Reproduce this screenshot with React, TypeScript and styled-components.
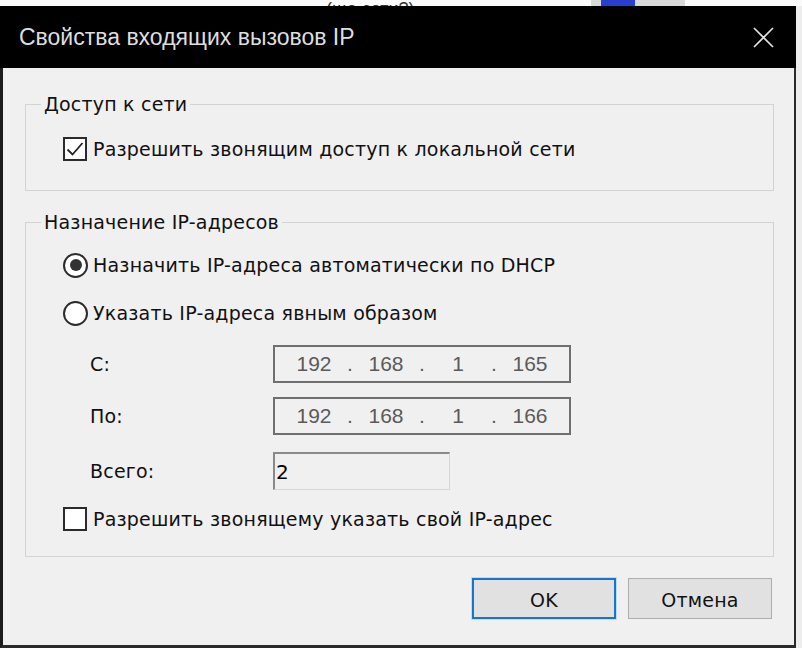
import React from 'react';
import styled, { createGlobalStyle } from 'styled-components';

const GlobalStyle = createGlobalStyle`
  html, body {
    margin: 0;
    padding: 0;
    background: #ececec;
  }
  body {
    font-family: "DejaVu Sans", Verdana, sans-serif;
    width: 802px;
    height: 648px;
    overflow: hidden;
  }
`;

const Screen = styled.div`
  display: flex;
  flex-direction: column;
  width: 802px;
  height: 648px;
`;

const Backdrop = styled.div`
  height: 6px;
  flex: 0 0 6px;
  background: #fafafa;
  overflow: hidden;
  display: flex;
  align-items: flex-end;
`;

const BackdropText = styled.span`
  margin-left: 326px;
  margin-bottom: -12px;
  font-family: "Liberation Sans", Arial, sans-serif;
  font-size: 18px;
  color: #333;
  line-height: 18px;
`;

const BackdropWindow = styled.div`
  margin-left: 176px;
  width: 84px;
  height: 6px;
  background: #d9d9d9;
  display: flex;
  padding-left: 10px;
`;

const BackdropIcon = styled.div`
  width: 34px;
  height: 6px;
  background: #2a3fd0;
`;

const Desk = styled.div`
  flex: 1;
  display: flex;
`;

const Dialog = styled.div`
  width: 796px;
  display: flex;
  flex-direction: column;
  border-left: 3px solid #1c1c1c;
  border-right: 2px solid #2a2a2a;
  border-bottom: 3px solid #2a2a2a;
  box-sizing: border-box;
  height: 642px;
`;

const TitleBar = styled.div`
  height: 62px;
  flex: 0 0 62px;
  background: #000;
  display: flex;
  align-items: center;
  justify-content: space-between;
  padding: 0 17px 0 19px;
  margin-left: -3px;
  margin-right: -2px;
`;

const Title = styled.div`
  font-family: "Liberation Sans", Arial, sans-serif;
  font-size: 23px;
  color: #dedede;
`;

const CloseButton = styled.div`
  width: 28px;
  height: 28px;
  display: flex;
  align-items: center;
  justify-content: center;
  margin-right: 2px;
`;

const Body = styled.div`
  flex: 1;
  background: #f0f0f0;
  padding: 24px 20px 0 22px;
  display: flex;
  flex-direction: column;
  letter-spacing: 0.2px;
`;

const Group = styled.fieldset<{ $gap: number }>`
  margin: 0 0 ${(p) => p.$gap}px 0;
  border: 1px solid #d3d3d3;
  padding: 0 0 0 37px;
  min-width: 0;
`;

const Legend = styled.legend`
  font-size: 19px;
  line-height: 24px;
  color: #111;
  padding: 0 3px;
  margin-left: -22px;
`;

const Row = styled.div<{ $top: number }>`
  display: flex;
  align-items: center;
  height: 36px;
  margin-top: ${(p) => p.$top}px;
  font-size: 19px;
  color: #111;
`;

const CheckBox = styled.div`
  width: 24px;
  height: 24px;
  box-sizing: border-box;
  border: 2px solid #2b2b2b;
  background: #fff;
  display: flex;
  align-items: center;
  justify-content: center;
  margin-right: 6px;
`;

const Radio = styled.div<{ $checked?: boolean }>`
  width: 25px;
  height: 25px;
  box-sizing: border-box;
  border: 2px solid #2b2b2b;
  border-radius: 50%;
  background: #fff;
  display: flex;
  align-items: center;
  justify-content: center;
  margin-right: 5px;

  &::after {
    content: '';
    display: ${(p) => (p.$checked ? 'block' : 'none')};
    width: 12px;
    height: 12px;
    border-radius: 50%;
    background: #333;
  }
`;

const FieldRow = styled.div<{ $top: number }>`
  display: grid;
  grid-template-columns: 183px auto;
  align-items: center;
  margin-top: ${(p) => p.$top}px;
  padding-left: 27px;
  font-size: 19px;
  color: #111;
`;

const IpField = styled.div`
  width: 298px;
  height: 38px;
  box-sizing: border-box;
  border: 2px solid #6f6f6f;
  background: #f0f0f0;
  display: flex;
  align-items: center;
  padding-left: 16px;
  color: #5a5a5a;
  font-family: "Liberation Sans", Arial, sans-serif;
  font-size: 21px;
  letter-spacing: 0;
`;

const Octet = styled.span`
  width: 46px;
  text-align: center;
`;

const Dot = styled.span`
  width: 26px;
  text-align: center;
`;

const CountField = styled.div`
  width: 177px;
  height: 38px;
  box-sizing: border-box;
  border-top: 2px solid #8a8a8a;
  border-left: 2px solid #8a8a8a;
  border-right: 1px solid #d6d6d6;
  border-bottom: 1px solid #d6d6d6;
  background: #f0f0f0;
  display: flex;
  align-items: center;
  padding-left: 1px;
  font-size: 20px;
  color: #000;
`;

const Spacer = styled.div<{ $h: number }>`
  height: ${(p) => p.$h}px;
`;

const Buttons = styled.div`
  display: flex;
  justify-content: flex-end;
  gap: 12px;
  padding-right: 2px;
`;

const Button = styled.div<{ $default?: boolean }>`
  width: 144px;
  height: 41px;
  box-sizing: border-box;
  background: #e1e1e1;
  border: ${(p) => (p.$default ? '2px solid #1a74c9' : '1px solid #adadad')};
  box-shadow: ${(p) => (p.$default ? '0 0 0 1px #b8def8' : 'none')};
  display: flex;
  align-items: center;
  justify-content: center;
  padding-top: 3px;
  font-size: 19px;
  color: #111;
`;

const Edge = styled.div`
  flex: 1;
  background: #ededed;
`;

const CheckMark = () => (
  <svg width="20" height="20" viewBox="0 0 20 20">
    <path d="M2.5 10.5 L7.5 15.5 L17.5 4" fill="none" stroke="#222" strokeWidth="1.8" />
  </svg>
);

const CloseIcon = () => (
  <svg width="21" height="21" viewBox="0 0 21 21">
    <path d="M1 1 L20 20 M20 1 L1 20" stroke="#e4e4e4" strokeWidth="1.6" />
  </svg>
);

const IpAddress = ({ parts }: { parts: string[] }) => (
  <IpField>
    <Octet>{parts[0]}</Octet>
    <Dot>.</Dot>
    <Octet>{parts[1]}</Octet>
    <Dot>.</Dot>
    <Octet>{parts[2]}</Octet>
    <Dot>.</Dot>
    <Octet>{parts[3]}</Octet>
  </IpField>
);

const App: React.FC = () => {
  return (
    <Screen>
      <GlobalStyle />
      <Backdrop>
        <BackdropText>(ща сети?)</BackdropText>
        <BackdropWindow>
          <BackdropIcon />
        </BackdropWindow>
      </Backdrop>
      <Desk>
        <Dialog>
          <TitleBar>
            <Title>Свойства входящих вызовов IP</Title>
            <CloseButton>
              <CloseIcon />
            </CloseButton>
          </TitleBar>
          <Body>
            <Group $gap={19}>
              <Legend>Доступ к сети</Legend>
              <Row $top={15}>
                <CheckBox>
                  <CheckMark />
                </CheckBox>
                Разрешить звонящим доступ к локальной сети
              </Row>
              <Spacer $h={23} />
            </Group>

            <Group $gap={21}>
              <Legend>Назначение IP-адресов</Legend>
              <Row $top={13}>
                <Radio $checked />
                Назначить IP-адреса автоматически по DHCP
              </Row>
              <Row $top={12}>
                <Radio />
                Указать IP-адреса явным образом
              </Row>
              <FieldRow $top={14}>
                <span>С:</span>
                <IpAddress parts={['192', '168', '1', '165']} />
              </FieldRow>
              <FieldRow $top={14}>
                <span>По:</span>
                <IpAddress parts={['192', '168', '1', '166']} />
              </FieldRow>
              <FieldRow $top={17}>
                <span>Всего:</span>
                <CountField>2</CountField>
              </FieldRow>
              <Row $top={11}>
                <CheckBox />
                Разрешить звонящему указать свой IP-адрес
              </Row>
              <Spacer $h={19} />
            </Group>

            <Buttons>
              <Button $default>OK</Button>
              <Button>Отмена</Button>
            </Buttons>
          </Body>
        </Dialog>
        <Edge />
      </Desk>
    </Screen>
  );
};

export default App;
